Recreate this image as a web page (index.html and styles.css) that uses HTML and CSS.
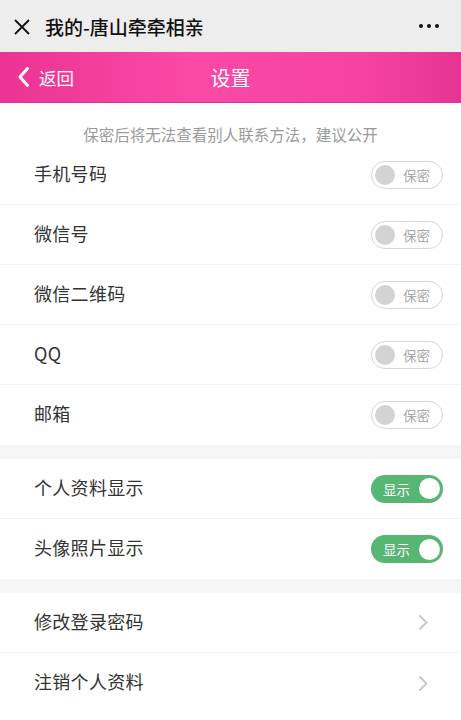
FILE: index.html
```html
<!DOCTYPE html>
<html lang="zh-CN">
<head>
<meta charset="utf-8">
<title>设置</title>
<link rel="stylesheet" href="styles.css">
</head>
<body>
<div class="topbar">
  <svg class="close" width="16" height="16" viewBox="0 0 16 16"><path d="M1 1L15 15M15 1L1 15" stroke="#111" stroke-width="1.8" fill="none"/></svg>
  <span class="top-title">我的-唐山牵牵相亲</span>
  <span class="dots"><i></i><i></i><i></i></span>
</div>
<div class="header">
  <div class="back">
    <svg width="13" height="22" viewBox="0 0 13 22"><path d="M10.5 2.5L3 11L10.5 19.5" stroke="#fff" stroke-width="3" fill="none" stroke-linecap="round" stroke-linejoin="round"/></svg>
    <span>返回</span>
  </div>
  <div class="h-title">设置</div>
</div>
<div class="hint">保密后将无法查看别人联系方法，建议公开</div>
<div class="group">
  <div class="row"><span class="label">手机号码</span><span class="sw off"><i></i><b>保密</b></span></div>
  <div class="row"><span class="label">微信号</span><span class="sw off"><i></i><b>保密</b></span></div>
  <div class="row"><span class="label">微信二维码</span><span class="sw off"><i></i><b>保密</b></span></div>
  <div class="row"><span class="label">QQ</span><span class="sw off"><i></i><b>保密</b></span></div>
  <div class="row"><span class="label">邮箱</span><span class="sw off"><i></i><b>保密</b></span></div>
</div>
<div class="gap"></div>
<div class="group">
  <div class="row"><span class="label">个人资料显示</span><span class="sw on"><b>显示</b><i></i></span></div>
  <div class="row"><span class="label">头像照片显示</span><span class="sw on"><b>显示</b><i></i></span></div>
</div>
<div class="gap"></div>
<div class="group">
  <div class="row link"><span class="label">修改登录密码</span><svg width="10" height="17" viewBox="0 0 10 17"><path d="M1.5 1.5L8.5 8.5L1.5 15.5" stroke="#c6c6c6" stroke-width="1.8" fill="none"/></svg></div>
  <div class="row link"><span class="label">注销个人资料</span><svg width="10" height="17" viewBox="0 0 10 17"><path d="M1.5 1.5L8.5 8.5L1.5 15.5" stroke="#c6c6c6" stroke-width="1.8" fill="none"/></svg></div>
</div>
</body>
</html>
```
FILE: styles.css
```css
* { box-sizing: border-box; }
body {
  margin: 0;
  background: #fff;
  font-family: "Noto Sans CJK SC", "Noto Sans", sans-serif;
  color: #333;
}
.topbar {
  height: 52px;
  background: #ededed;
  display: flex;
  align-items: center;
  padding: 0 22px 0 14px;
}
.close { flex: none; margin-top: 1px; }
.top-title {
  margin-left: 15px;
  font-size: 19px;
  font-weight: 500;
  color: #111;
  flex: 1;
}
.dots { display: flex; gap: 4px; }
.dots i {
  width: 4px; height: 4px; border-radius: 50%;
  background: #111; display: block;
}
.header {
  height: 51px;
  background: linear-gradient(90deg, #eb3393 0%, #fb49a6 42%, #f542a1 80%, #e63492 100%);
  display: flex;
  align-items: center;
  position: relative;
  color: #fff;
  border-bottom: 1px solid #d9338a;
}
.back {
  display: flex;
  align-items: center;
  padding-left: 17px;
  gap: 9px;
  font-size: 17.5px;
}
.h-title {
  position: absolute;
  left: 0; right: 0;
  text-align: center;
  font-size: 20px;
  pointer-events: none;
}
.hint {
  height: 42px;
  padding-top: 21px;
  line-height: 20px;
  text-align: center;
  font-size: 15.5px;
  color: #9a9a9a;
}
.row {
  height: 60px;
  display: flex;
  align-items: center;
  justify-content: space-between;
  padding: 0 18px 0 34px;
  border-bottom: 1px solid #f3f3f3;
}
.row.link { padding-right: 33px; }
.group .row:last-child { border-bottom: none; }
.label {
  font-size: 18px;
  color: #333;
  letter-spacing: 0.3px;
  margin-bottom: 4px;
}
.gap { height: 14px; background: #f5f5f5; }
.sw {
  width: 72px;
  height: 28px;
  border-radius: 14px;
  display: flex;
  align-items: center;
  font-size: 13.5px;
}
.sw b { font-weight: normal; }
.sw i { display: block; border-radius: 50%; }
.sw.off {
  border: 1px solid #d6d6d6;
  background: #fff;
  padding-left: 3px;
  gap: 8px;
  color: #a8a8a8;
}
.sw.off i { width: 20px; height: 20px; background: #d3d3d3; }
.sw.on {
  background: #58b675;
  color: #fff;
  padding: 0 3px 0 12px;
  justify-content: space-between;
}
.sw.on i { width: 21px; height: 21px; background: #fff; }
```
